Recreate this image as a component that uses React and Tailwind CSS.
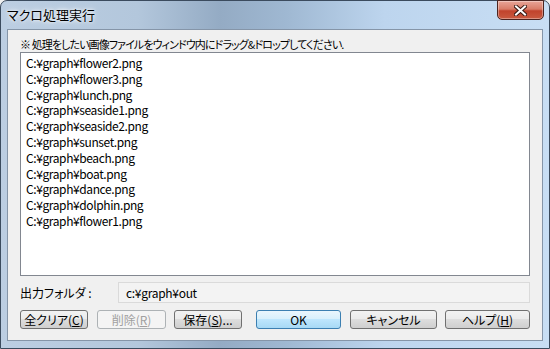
import { useState } from "react";

// 入力ファイル一覧
const files = [
  "C:¥graph¥flower2.png",
  "C:¥graph¥flower3.png",
  "C:¥graph¥lunch.png",
  "C:¥graph¥seaside1.png",
  "C:¥graph¥seaside2.png",
  "C:¥graph¥sunset.png",
  "C:¥graph¥beach.png",
  "C:¥graph¥boat.png",
  "C:¥graph¥dance.png",
  "C:¥graph¥dolphin.png",
  "C:¥graph¥flower1.png",
];

const font = "font-['Noto_Sans_CJK_JP','Liberation_Sans',sans-serif] [font-feature-settings:'palt']";

const Btn = ({ children, w, disabled, primary }) => (
  <button
    disabled={disabled}
    className={`h-[19px] ${w} rounded-[3px] border text-[12px] leading-none flex items-center justify-center ${
      primary
        ? "border-[#3c7fb1] bg-[linear-gradient(#eaf6fd_0%,#d9f0fc_45%,#bee6fd_50%,#a7d9f5_100%)] text-black"
        : disabled
        ? "border-[#adb2b5] bg-[#f4f4f4] text-[#a0a0a0]"
        : "border-[#707070] bg-[linear-gradient(#f2f2f2_0%,#ebebeb_45%,#dddddd_50%,#cfcfcf_100%)] text-black"
    }`}
  >
    {children}
  </button>
);

const App = () => {
  const [list] = useState(files);

  return (
    <div className={`w-[550px] h-[349px] ${font} bg-[#f0f0f0]`}>
      <div className="w-[550px] h-[349px] rounded-t-[7px] border border-[#3b4b5e] bg-[linear-gradient(90deg,#bccee2_0%,#b3c7dc_25%,#94abc4_40%,#9fb8d2_52%,#bdd5ee_70%,#c8def4_100%)] flex flex-col relative">
        {/* タイトルバー */}
        <div className="h-[28px] flex items-start pl-[6px] pt-[4px]">
          <span className="text-[13px] text-black [text-shadow:0_0_6px_white,0_0_3px_white]">マクロ処理実行</span>
        </div>

        {/* 閉じるボタン */}
        <div className="absolute right-[5px] top-[-1px] w-[47px] h-[20px] rounded-b-[5px] border border-[#4b2420] bg-[linear-gradient(#e8a598_0%,#d87c68_45%,#c1432c_55%,#c95a40_100%)] flex items-center justify-center shadow-[inset_0_0_0_1px_rgba(255,255,255,0.35)]">
          <svg width="13" height="11" viewBox="0 0 13 11">
            <path d="M2 1.5 L11 9.5 M11 1.5 L2 9.5" stroke="#3a1a14" strokeWidth="4" strokeLinecap="square" />
            <path d="M2 1.5 L11 9.5 M11 1.5 L2 9.5" stroke="#ffffff" strokeWidth="2" strokeLinecap="square" />
          </svg>
        </div>

        {/* クライアント領域 */}
        <div className="mx-[6px] mb-[7px] flex-1 border border-[#8595a8] bg-[#f0f0f0] flex flex-col px-[12px] pt-[7px] pb-[11px]">
          <p className="text-[11px] leading-[14px] h-[14px] tracking-[-0.9px] whitespace-nowrap text-black">
            ※ 処理をしたい画像ファイルをウィンドウ内にドラッグ&ドロップしてください.
          </p>

          <div className="mt-[1px] h-[224px] border border-[#828790] bg-white pl-[5px] pt-[2px]">
            {list.map((f) => (
              <div key={f} className="text-[12px] leading-[15.8px] tracking-[-0.4px] text-black">
                {f}
              </div>
            ))}
          </div>

          <div className="mt-[6px] h-[21px] flex items-center">
            <span className="w-[98px] text-[12px] text-black">出力フォルダ :</span>
            <div className="flex-1 h-[21px] border border-[#dadada] bg-[#f3f3f3] flex items-center pl-[7px] text-[12px] tracking-[-0.3px] text-black">
              c:¥graph¥out
            </div>
          </div>

          <div className="mt-[7px] flex items-center">
            <Btn w="w-[68px]">
              全クリア(<span className="underline">C</span>)
            </Btn>
            <div className="ml-[9px]">
              <Btn w="w-[69px]" disabled>
                削除(<span className="underline">R</span>)
              </Btn>
            </div>
            <div className="ml-[8px]">
              <Btn w="w-[68px]">
                保存(<span className="underline">S</span>)...
              </Btn>
            </div>
            <div className="ml-[14px]">
              <Btn w="w-[85px]" primary>
                OK
              </Btn>
            </div>
            <div className="ml-[9px]">
              <Btn w="w-[87px]">キャンセル</Btn>
            </div>
            <div className="ml-[8px]">
              <Btn w="w-[85px]">
                ヘルプ(<span className="underline">H</span>)
              </Btn>
            </div>
          </div>
        </div>
      </div>
    </div>
  );
};

export default App;
